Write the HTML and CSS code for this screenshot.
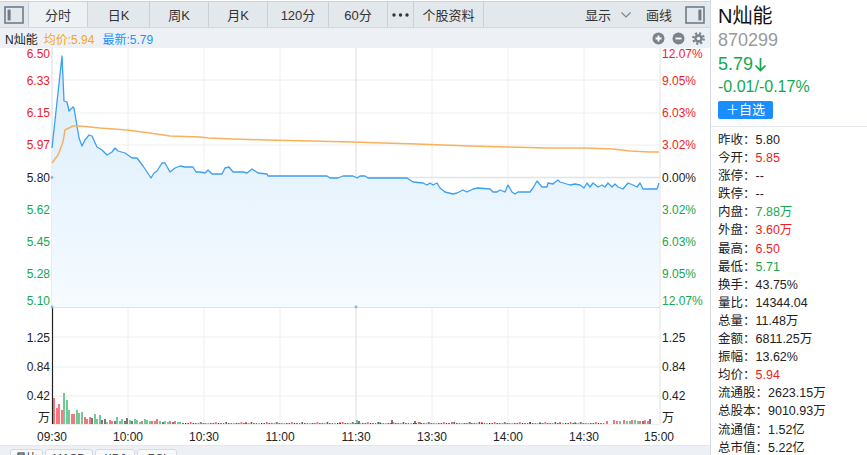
FILE: index.html
```html
<!DOCTYPE html>
<html lang="zh">
<head>
<meta charset="utf-8">
<title>N灿能 分时</title>
<link rel="stylesheet" href="styles.css">
</head>
<body>
<div class="app">
  <div class="main">
    <div class="tabs">
      <div class="tab tab-icon">
        <svg width="20" height="18" viewBox="0 0 20 18"><rect x="1" y="1" width="18" height="16" fill="none" stroke="#6f7b88" stroke-width="1.6"/><rect x="3.6" y="3.6" width="3" height="10.8" fill="#6f7b88"/></svg>
      </div>
      <div class="tab active w59">分时</div>
      <div class="tab w62">日K</div>
      <div class="tab w59">周K</div>
      <div class="tab w59">月K</div>
      <div class="tab w61">120分</div>
      <div class="tab w59">60分</div>
      <div class="tab w26"><svg width="17" height="4" viewBox="0 0 17 4"><circle cx="2" cy="2" r="1.7" fill="#333"/><circle cx="8.5" cy="2" r="1.7" fill="#333"/><circle cx="15" cy="2" r="1.7" fill="#333"/></svg></div>
      <div class="tab w70">个股资料</div>
      <div class="spacer"></div>
      <div class="tool">显示<svg class="chev" width="10" height="6" viewBox="0 0 10 6"><polyline points="0.5,0.5 5,5 9.5,0.5" fill="none" stroke="#7b8592" stroke-width="1.2"/></svg></div>
      <div class="tool draw">画线</div>
      <div class="tool ticon">
        <svg width="20" height="18" viewBox="0 0 20 18"><rect x="1" y="1" width="18" height="16" fill="none" stroke="#6f7b88" stroke-width="1.6"/><rect x="13.4" y="3.6" width="3" height="10.8" fill="#6f7b88"/></svg>
      </div>
    </div>
    <div class="info">
      <span class="name">N灿能</span>
      <span class="avg">均价:5.94</span>
      <span class="last">最新:5.79</span>
      <div class="ctrls">
        <svg width="13" height="13" viewBox="0 0 13 13"><circle cx="6.5" cy="6.5" r="6" fill="#7a828c"/><path d="M3.5 6.5H9.5M6.5 3.5V9.5" stroke="#fff" stroke-width="1.8"/></svg>
        <svg width="13" height="13" viewBox="0 0 13 13"><circle cx="6.5" cy="6.5" r="6" fill="#7a828c"/><path d="M3.5 6.5H9.5" stroke="#fff" stroke-width="1.8"/></svg>
        <svg width="13" height="13" viewBox="0 0 13 13"><circle cx="6.5" cy="6.5" r="4.2" fill="#7a828c"/><circle cx="6.5" cy="6.5" r="5.2" fill="none" stroke="#7a828c" stroke-width="2.4" stroke-dasharray="2.1 1.98"/><circle cx="6.5" cy="6.5" r="1.8" fill="#edf1f5"/></svg>
      </div>
    </div>
    <svg class="chart" width="710" height="397" viewBox="0 48 710 397">
      <defs>
        <linearGradient id="fillg" gradientUnits="userSpaceOnUse" x1="0" y1="56" x2="0" y2="307">
          <stop offset="0" stop-color="#d9edfc"/>
          <stop offset="1" stop-color="#f6fbff"/>
        </linearGradient>
        <pattern id="tiny" patternUnits="userSpaceOnUse" x="185" y="421" width="25.33" height="3">
          <rect x="0" y="2" width="1.2" height="1" fill="#222"/>
          <rect x="2.53" y="2" width="1.2" height="1" fill="#222"/>
          <rect x="5.07" y="1" width="1.2" height="2" fill="#ee1c25"/>
          <rect x="7.6" y="2" width="1.2" height="1" fill="#222"/>
          <rect x="10.13" y="2" width="1.2" height="1" fill="#222"/>
          <rect x="12.67" y="2" width="1.2" height="1" fill="#14a750"/>
          <rect x="15.2" y="1" width="1.2" height="2" fill="#222"/>
          <rect x="17.73" y="2" width="1.2" height="1" fill="#222"/>
          <rect x="20.27" y="2" width="1.2" height="1" fill="#ee1c25"/>
          <rect x="22.8" y="2" width="1.2" height="1" fill="#14a750"/>
        </pattern>
      </defs>
      <!-- grid -->
      <g class="grid">
        <path d="M52 80H660M52 113H660M52 145H660M52 210H660M52 242H660M52 275H660"/>
        <path d="M128 48V424M204 48V424M280 48V424M432 48V424M508 48V424M584 48V424"/>
        <path d="M52 337H660M52 367H660M52 396H660"/>
      </g>
      <path class="mid" d="M52 177.5H660"/>
      <path class="g1130" d="M356 48V424"/>
      <path class="axis-l" d="M52 48V307"/>
      <path class="axis-r" d="M660 48V424"/>
      <path class="sep" d="M52 307H660"/>
      <path class="base" d="M52 424.5H660"/>

      <!-- price fill + lines -->
      <polygon class="pfill" points="52,148 62,56 64,101 67,102 69,111 73,107 74,108 79,138 82,146 85,140 89,135 92,136 97,147 102,150 107,155 112,152 115,148 118,151 125,153 132,158 137,158 143,166 147,172 151,178 154,173 157,171 162,163 165,163 170,172 175,168 180,166 185,167 193,167 196,172 200,172 205,173 208,170 212,174 222,174 225,168 229,167 233,172 243,172 247,173 252,169 258,173 267,174 268,176 327,176 330,178 338,178 343,176 353,176 357,178 360,176 365,176 368,178 407,178 413,182 423,183 427,185 430,183 433,185 437,183 440,188 445,192 453,194 457,193 463,190 467,192 473,189 478,188 490,189 493,192 497,192 500,190 505,192 508,185 512,192 515,194 518,192 530,192 533,188 537,181 542,187 547,187 548,183 553,184 558,180 560,182 570,185 575,184 580,185 584,188 587,183 590,187 593,183 598,187 602,185 605,187 608,183 612,187 615,184 618,187 623,189 628,183 633,185 637,187 640,183 643,189 657,189 659,183 659,307 52,307"/>
      <polyline class="pline" points="52,148 62,56 64,101 67,102 69,111 73,107 74,108 79,138 82,146 85,140 89,135 92,136 97,147 102,150 107,155 112,152 115,148 118,151 125,153 132,158 137,158 143,166 147,172 151,178 154,173 157,171 162,163 165,163 170,172 175,168 180,166 185,167 193,167 196,172 200,172 205,173 208,170 212,174 222,174 225,168 229,167 233,172 243,172 247,173 252,169 258,173 267,174 268,176 327,176 330,178 338,178 343,176 353,176 357,178 360,176 365,176 368,178 407,178 413,182 423,183 427,185 430,183 433,185 437,183 440,188 445,192 453,194 457,193 463,190 467,192 473,189 478,188 490,189 493,192 497,192 500,190 505,192 508,185 512,192 515,194 518,192 530,192 533,188 537,181 542,187 547,187 548,183 553,184 558,180 560,182 570,185 575,184 580,185 584,188 587,183 590,187 593,183 598,187 602,185 605,187 608,183 612,187 615,184 618,187 623,189 628,183 633,185 637,187 640,183 643,189 657,189 659,183"/>
      <polyline class="aline" points="52,163 58,155 63,142 65,130 73,126 80,126 90,127 100,128 127,130 150,133 170,136 200,137 208,138 233,139 267,140 310,141 353,142 383,143 417,144 443,145 470,146 507,147 547,148 585,148 613,149 630,151 650,152 659,152"/>

      <!-- volume bars -->
      <path class="vk" d="M52.5 307V424M92 418V424M102 420V424M105 419V424M115 421V424M125 421V424M127 418V424M132 421V424M163 422V424M173 422V424M183 423V424M359 421V424M392 420V424M415 421V424M643 421V424M650 419V424"/>
      <path class="vr" d="M54 398V424M57 408V424M59 404V424M62 410V424M72 414V424M74 414V424M85 417V424M87 419V424M90 417V424M110 420V424M112 421V424M142 421V424M152 421V424M155 421V424M157 419V424M170 421V424M175 421V424M246 422V424M340 422V424M452 422V424M482 422V424M530 422V424M560 422V424M607 421V424M614 420V424M617 421V424M624 420V424M632 420V424M640 421V424M645 420V424M648 421V424"/>
      <path class="vg" d="M64 393V424M67 400V424M69 410V424M77 410V424M79 413V424M82 412V424M95 414V424M97 419V424M100 415V424M107 422V424M117 417V424M120 421V424M122 419V424M130 420V424M135 419V424M137 420V424M140 422V424M145 419V424M147 420V424M150 421V424M160 421V424M165 421V424M168 422V424M178 422V424M180 422V424M357 420V424M380 422V424M420 422V424M470 422V424M540 422V424M575 422V424M620 421V424M627 421V424M630 421V424M635 420V424M638 421V424"/>
      <rect x="185" y="421" width="420" height="3" fill="url(#tiny)"/>

      <circle class="dot" cx="52" cy="177.5" r="1.4"/>
      <circle class="dot" cx="52" cy="307" r="1.4"/>
      <circle class="dot" cx="356" cy="307" r="1.4"/>

      <!-- left labels -->
      <g class="lbl l">
        <text class="up" x="50" y="58">6.50</text>
        <text class="up" x="50" y="85">6.33</text>
        <text class="up" x="50" y="117">6.15</text>
        <text class="up" x="50" y="149">5.97</text>
        <text class="eq" x="50" y="182">5.80</text>
        <text class="dn" x="50" y="214">5.62</text>
        <text class="dn" x="50" y="246">5.45</text>
        <text class="dn" x="50" y="278">5.28</text>
        <text class="dn" x="50" y="305">5.10</text>
        <text class="eq" x="50" y="342">1.25</text>
        <text class="eq" x="50" y="371">0.84</text>
        <text class="eq" x="50" y="400">0.42</text>
        <text class="eq" x="50" y="422">万</text>
      </g>
      <!-- right labels -->
      <g class="lbl r">
        <text class="up" x="662" y="58">12.07%</text>
        <text class="up" x="662" y="85">9.05%</text>
        <text class="up" x="662" y="117">6.03%</text>
        <text class="up" x="662" y="149">3.02%</text>
        <text class="eq" x="662" y="182">0.00%</text>
        <text class="dn" x="662" y="214">3.02%</text>
        <text class="dn" x="662" y="246">6.03%</text>
        <text class="dn" x="662" y="278">9.05%</text>
        <text class="dn" x="662" y="305">12.07%</text>
        <text class="eq" x="662" y="342">1.25</text>
        <text class="eq" x="662" y="371">0.84</text>
        <text class="eq" x="662" y="400">0.42</text>
        <text class="eq" x="662" y="422">万</text>
      </g>
      <!-- time axis -->
      <g class="lbl t">
        <text x="52" y="441">09:30</text>
        <text x="128" y="441">10:00</text>
        <text x="204" y="441">10:30</text>
        <text x="280" y="441">11:00</text>
        <text x="356" y="441">11:30</text>
        <text x="432" y="441">13:30</text>
        <text x="508" y="441">14:00</text>
        <text x="584" y="441">14:30</text>
        <text x="659" y="441">15:00</text>
      </g>
    </svg>
    <div class="subtabs">
      <div class="stab s1">量比</div>
      <div class="stab s2">MACD</div>
      <div class="stab s3">KDJ</div>
      <div class="stab s4">RSI</div>
    </div>
  </div>
  <div class="side">
    <div class="head">
      <div class="title">N灿能</div>
      <div class="code">870299</div>
      <div class="price">5.79<svg class="arrow" width="13" height="15" viewBox="0 0 13 15"><path d="M6.5 1V13.5M1.5 8.5L6.5 13.5L11.5 8.5" fill="none" stroke="#12a84f" stroke-width="1.7"/></svg></div>
      <div class="chg">-0.01/-0.17%</div>
      <div class="btn">＋自选</div>
    </div>
    <div class="stats">
      <div class="row">昨收：<span>5.80</span></div>
      <div class="row">今开：<span class="up">5.85</span></div>
      <div class="row">涨停：<span>--</span></div>
      <div class="row">跌停：<span>--</span></div>
      <div class="row">内盘：<span class="dn">7.88万</span></div>
      <div class="row">外盘：<span class="up">3.60万</span></div>
      <div class="row">最高：<span class="up">6.50</span></div>
      <div class="row">最低：<span class="dn">5.71</span></div>
      <div class="row">换手：<span>43.75%</span></div>
      <div class="row">量比：<span>14344.04</span></div>
      <div class="row">总量：<span>11.48万</span></div>
      <div class="row">金额：<span>6811.25万</span></div>
      <div class="row">振幅：<span>13.62%</span></div>
      <div class="row">均价：<span class="up">5.94</span></div>
      <div class="row">流通股：<span>2623.15万</span></div>
      <div class="row">总股本：<span>9010.93万</span></div>
      <div class="row">流通值：<span>1.52亿</span></div>
      <div class="row">总市值：<span>5.22亿</span></div>
    </div>
  </div>
</div>
</body>
</html>
```
FILE: styles.css
```css
* { box-sizing: border-box; }
html, body {
  margin: 0;
  padding: 0;
  width: 867px;
  height: 455px;
  overflow: hidden;
  background: #fff;
  font-family: "Liberation Sans", "Noto Sans CJK SC", sans-serif;
  color: #222;
}
.app {
  display: flex;
  width: 867px;
  height: 455px;
}
.main {
  width: 710px;
  height: 455px;
  display: flex;
  flex-direction: column;
  overflow: hidden;
}
.tabs {
  margin-top: 1px;
  height: 27px;
  border-top: 1px solid #cdd3da;
  border-bottom: 1px solid #d3d9df;
  background: #e3e8ed;
  display: flex;
  align-items: stretch;
  font-size: 13px;
  color: #333;
}
.tab {
  border-right: 1px solid #c9d0d8;
  display: flex;
  align-items: center;
  justify-content: center;
}
.tab-icon { width: 29px; }
.tab.active { background: #eef1f4; }
.w59 { width: 59px; }
.w62 { width: 62px; }
.w61 { width: 61px; }
.w26 { width: 26px; }
.w70 { width: 70px; }
.spacer { flex: 1; }
.tool {
  display: flex;
  align-items: center;
}
.chev { margin-left: 10px; }
.draw { margin-left: 15px; }
.ticon { margin-left: 13px; margin-right: 5px; }
.info {
  height: 20px;
  background: #edf1f5;
  display: flex;
  align-items: center;
  font-size: 12px;
  padding-left: 5px;
}
.name { color: #222; }
.avg { color: #f5a623; margin-left: 6px; }
.last { color: #1e90ff; margin-left: 8px; }
.ctrls {
  margin-left: auto;
  margin-right: 5px;
  display: flex;
  gap: 7px;
}
.chart { display: block; flex: none; }
.grid path { stroke: #eeeeee; stroke-width: 1; fill: none; }
.mid { stroke: #dde4ec; stroke-width: 1.5; }
.g1130 { stroke: #dcdcdc; stroke-width: 1; }
.axis-l { stroke: #d3dbe4; stroke-width: 1; }
.axis-r { stroke: #e2e2e2; stroke-width: 1; }
.sep { stroke: #e3e3e3; stroke-width: 2; }
.base { stroke: #ececec; stroke-width: 1; }
.pfill { fill: url(#fillg); stroke: none; }
.pline { fill: none; stroke: #3d9ff0; stroke-width: 1.3; stroke-linejoin: round; }
.aline { fill: none; stroke: #f7b15c; stroke-width: 1.5; stroke-linejoin: round; }
.vk { stroke: #222; stroke-width: 1.2; }
.vr { stroke: #ee1c25; stroke-width: 1.2; }
.vg { stroke: #14a750; stroke-width: 1.2; }
.dot { fill: #86b8e6; }
.lbl text { font-family: "Liberation Sans", "Noto Sans CJK SC", sans-serif; font-size: 12px; }
.lbl.l text { text-anchor: end; }
.lbl.r text { text-anchor: start; }
.lbl.t text { text-anchor: middle; fill: #222; }
.lbl .up { fill: #ee1c25; }
.lbl .dn { fill: #14a750; }
.lbl .eq { fill: #222; }
.subtabs {
  height: 10px;
  flex: none;
  background: #edf1f5;
  border-top: 1px solid #e3e7ec;
  display: flex;
  align-items: flex-start;
  padding: 3px 0 0 10px;
  gap: 2px;
  overflow: hidden;
}
.stab {
  height: 18px;
  background: #f8f9fb;
  border: 1px solid #d6dbe1;
  border-radius: 3px 3px 0 0;
  font-size: 11px;
  line-height: 16px;
  text-align: center;
  color: #333;
}
.s1 { width: 33px; }
.s2 { width: 48px; }
.s3 { width: 40px; }
.s4 { width: 40px; }
.side {
  width: 157px;
  height: 455px;
  border-left: 1px solid #d5dae0;
  overflow: hidden;
}
.head {
  height: 127px;
  padding: 4px 0 0 7px;
  border-bottom: 1px solid #e3e6ea;
}
.title { font-size: 20px; line-height: 24px; color: #111; }
.code { font-size: 18px; line-height: 24px; color: #9a9a9a; }
.price { font-size: 18px; line-height: 24px; color: #12a84f; display: flex; align-items: center; }
.arrow { margin-left: 1px; margin-top: 1px; }
.chg { font-size: 16px; line-height: 22px; color: #12a84f; }
.btn {
  margin-top: 3px;
  width: 55px;
  height: 18px;
  background: #1a8dff;
  color: #fff;
  border-radius: 2px;
  font-size: 13px;
  line-height: 18px;
  text-align: center;
}
.stats {
  padding: 4px 0 0 7px;
  font-size: 12.5px;
}
.row { line-height: 18.1px; height: 18.1px; white-space: nowrap; color: #222; }
.row .up { color: #ee1c25; }
.row .dn { color: #14a750; }
```
